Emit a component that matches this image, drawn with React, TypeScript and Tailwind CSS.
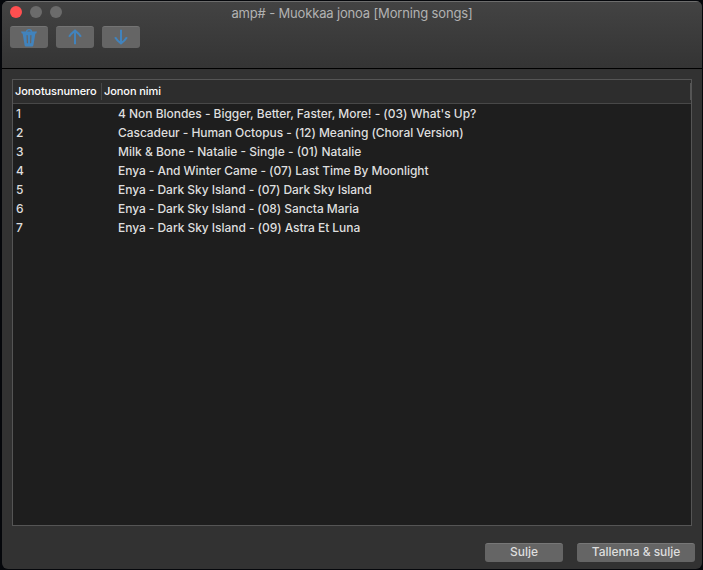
import React from 'react';

const tracks = [
  { name: "4 Non Blondes - Bigger, Better, Faster, More! - (03) What's Up?", tracking: 'tracking-[-0.03px]' },
  { name: 'Cascadeur - Human Octopus - (12) Meaning (Choral Version)', tracking: 'tracking-[-0.065px]' },
  { name: 'Milk & Bone - Natalie - Single - (01) Natalie', tracking: 'tracking-[0px]' },
  { name: 'Enya - And Winter Came - (07) Last Time By Moonlight', tracking: 'tracking-[-0.06px]' },
  { name: 'Enya - Dark Sky Island - (07) Dark Sky Island', tracking: 'tracking-[-0.06px]' },
  { name: 'Enya - Dark Sky Island - (08) Sancta Maria', tracking: 'tracking-[-0.06px]' },
  { name: 'Enya - Dark Sky Island - (09) Astra Et Luna', tracking: 'tracking-[-0.05px]' },
];

function ToolButton({ label, children }: { label: string; children: React.ReactNode }) {
  return (
    <button
      aria-label={label}
      className="flex h-[22px] w-[38px] items-center justify-center rounded-[3px] border-t border-[#747474] bg-[#656565] text-[#4183bd]"
    >
      {children}
    </button>
  );
}

function TrashIcon() {
  return (
    <svg width="18" height="20" viewBox="0 0 18 20" fill="none">
      <path d="M6.5 4C6.5 .8 11.5 .8 11.5 4" stroke="currentColor" strokeWidth="1.4" />
      <path
        d="M1 3.4H17L16.2 5.6H15.4L13.4 17.2Q13.2 18.5 12 18.5H6Q4.8 18.5 4.6 17.2L2.6 5.6H1.8Z"
        fill="currentColor"
      />
      <path d="M7.1 7.5L7.4 14.7M10.9 7.5L10.6 14.7" stroke="#656565" strokeWidth="1.2" strokeLinecap="round" />
    </svg>
  );
}

function ArrowIcon({ down = false }: { down?: boolean }) {
  return (
    <svg width="14" height="18" viewBox="0 0 14 18" fill="none" stroke="currentColor" strokeWidth="2" className={down ? 'mb-px rotate-180' : 'mb-px'}>
      <path d="M7 16.3V2.6M1.1 8.8Q2.8 5.8 7 2.6Q11.2 5.8 12.9 8.8" />
    </svg>
  );
}

export default function App() {
  return (
    <div className="h-[570px] w-[703px] overflow-hidden bg-[#05070b] pt-px pl-0.5 font-['Inter','Liberation_Sans',sans-serif] text-[#dedede]">
      <main className="flex h-[568px] w-[700px] flex-col overflow-hidden rounded-[6px] bg-[#323232]">
        <header className="flex h-[68px] shrink-0 flex-col border-t border-b border-t-[#6d6d6d] border-b-black bg-linear-to-b from-[#434343] to-[#343434]">
          <div className="grid h-[23px] grid-cols-[60px_1fr_60px] items-center">
            <div className="flex gap-2 pb-[3px] pl-2">
              <span className="size-3 shrink-0 rounded-full bg-[#ff4f50]" />
              <span className="size-3 shrink-0 rounded-full bg-[#6b6b6b]" />
              <span className="size-3 shrink-0 rounded-full bg-[#6b6b6b]" />
            </div>
            <h1 className="pb-0.5 text-center text-[13px] leading-4 tracking-[-0.16px] whitespace-nowrap text-[#b2b2b2]">amp# - Muokkaa jonoa [Morning songs]</h1>
          </div>
          <div className="mt-px flex gap-2 pl-2">
            <ToolButton label="Poista"><TrashIcon /></ToolButton>
            <ToolButton label="Ylös"><ArrowIcon /></ToolButton>
            <ToolButton label="Alas"><ArrowIcon down /></ToolButton>
          </div>
        </header>
        <section className="mt-2.5 ml-2.5 flex h-[447px] w-[680px] shrink-0 flex-col border border-[#555] bg-[#1e1e1e]">
          <div className="flex h-6 shrink-0 items-center border-b border-[#484848] bg-[#2d2d2d] text-[11px] font-medium text-white">
            <span className="flex h-[17px] w-[89px] items-center border-r border-[#484848] pl-0.5 tracking-[-0.08px]">Jonotusnumero</span>
            <span className="flex h-[17px] flex-1 items-center border-r border-[#555] pl-0.5 tracking-[-0.08px]">Jonon nimi</span>
          </div>
          <ul className="text-[12px] font-medium">
            {tracks.map((track, index) => (
              <li key={track.name} className="flex h-[19px] items-center whitespace-nowrap">
                <span className="w-[105px] pl-[3px]">{index + 1}</span>
                <span className={track.tracking}>{track.name}</span>
              </li>
            ))}
          </ul>
        </section>
        <footer className="mt-[17px] mr-[7px] flex justify-end gap-3.5 text-[12px] font-medium">
          <button className="h-[19px] w-[78px] rounded-[3px] border-t border-[#777] bg-[#656565] pb-[3px] leading-[15px] tracking-[-0.05px]">Sulje</button>
          <button className="h-[19px] w-[118px] rounded-[3px] border-t border-[#777] bg-[#656565] pb-[3px] leading-[15px] tracking-[-0.05px]">Tallenna &amp; sulje</button>
        </footer>
      </main>
    </div>
  );
}
